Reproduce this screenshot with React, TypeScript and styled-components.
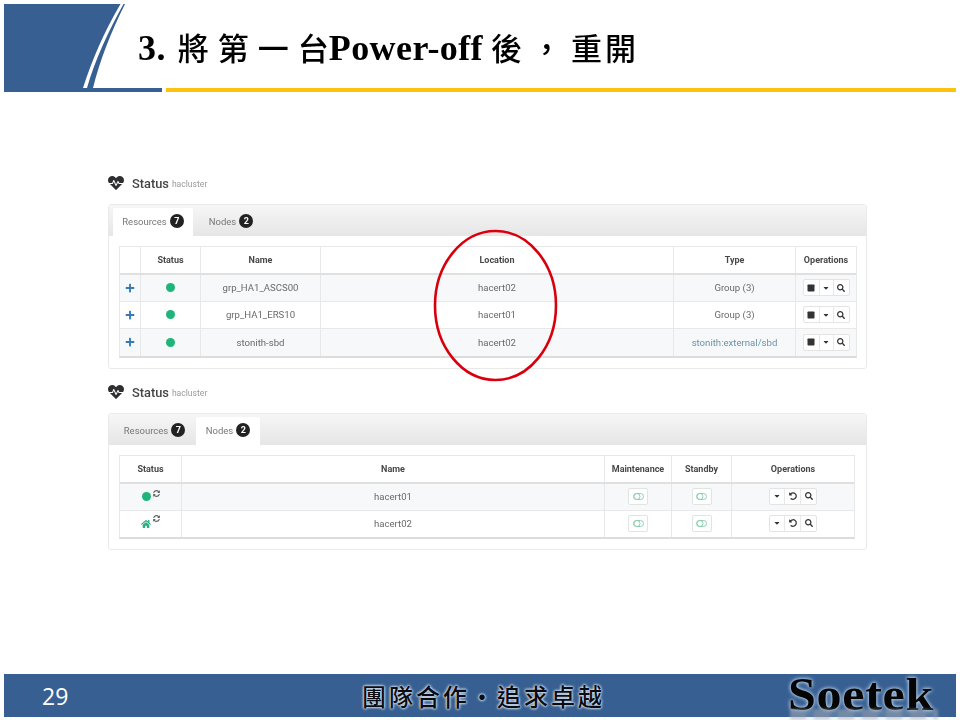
import React from "react";
import styled, { createGlobalStyle } from "styled-components";
import { FaHeartbeat, FaPlus, FaCaretDown, FaSearch, FaHome, FaSyncAlt, FaUndoAlt, FaStop } from "react-icons/fa";

const Global = createGlobalStyle`
  html, body { margin: 0; padding: 0; background: #fff; }
  body { font-family: Roboto, "Liberation Sans", sans-serif; }
`;

const Slide = styled.div`
  position: relative;
  width: 960px;
  height: 720px;
  box-sizing: border-box;
  padding: 4px 4px 3px;
  display: flex;
  flex-direction: column;
  overflow: hidden;
  background: #fff;
`;
const HeaderRow = styled.header`
  display: flex;
  align-items: center;
  height: 84px;
`;
const HeaderArt = styled.svg`
  flex: none;
  width: 121px;
  height: 84px;
`;
const Title = styled.h1`
  display: flex;
  align-items: baseline;
  margin: 0 0 0 13px;
  font: bold 36px "Liberation Serif", "Noto Sans CJK TC", serif;
  color: #000;
  white-space: nowrap;
  filter: blur(0.3px);
`;
const Latin = styled.span`
  letter-spacing: 0.4px;
`;
const Cjk = styled.span<{ $gap: number; $left: number; $right?: number }>`
  font-family: "Noto Sans CJK TC", sans-serif;
  font-weight: 500;
  font-size: 31px;
  letter-spacing: ${p => p.$gap}px;
  margin-left: ${p => p.$left}px;
  margin-right: ${p => p.$right ?? 0}px;
`;
const Rules = styled.div`
  display: flex;
  gap: 4px;
  height: 4px;
`;
const BlueRule = styled.div`
  width: 158px;
  background: #375f91;
`;
const GoldRule = styled.div`
  flex: 1;
  background: #fdc20e;
`;
const Main = styled.main`
  flex: 1;
  padding: 82px 89px 0 104px;
  display: flex;
  flex-direction: column;
  gap: 14px;
  filter: blur(0.45px);
`;
const Section = styled.section``;
const Heading = styled.div`
  display: flex;
  align-items: center;
  height: 30px;
  padding: 0 0 12px 0;
  box-sizing: border-box;
  color: #333;
  svg { font-size: 16px; margin-right: 8px; color: #2f2f33; }
`;
const HeadingTitle = styled.span`
  font-size: 12.8px;
  font-weight: 500;
  color: #444;
`;
const HeadingSub = styled.span`
  margin: 2px 0 0 3px;
  font-size: 8.6px;
  color: #9a9a9a;
`;
const Card = styled.div`
  border: 1px solid #e9e9e9;
  border-radius: 3px;
  background: #fff;
  padding-bottom: 10px;
`;
const TabBar = styled.div`
  display: flex;
  height: 31px;
  padding: 3px 0 0 4px;
  box-sizing: border-box;
  background: linear-gradient(#f6f6f6, #e6e6e6);
`;
const Tab = styled.div<{ $active?: boolean; $w: number }>`
  width: ${p => p.$w}px;
  display: flex;
  align-items: center;
  justify-content: center;
  gap: 3px;
  padding-bottom: 2px;
  box-sizing: border-box;
  font-size: 9.5px;
  color: #777;
  background: ${p => (p.$active ? "#fff" : "transparent")};
  border-radius: 2px 2px 0 0;
`;
const Badge = styled.span`
  width: 14px;
  height: 14px;
  border-radius: 50%;
  background: #222;
  color: #fff;
  font-size: 9px;
  font-weight: 700;
  display: flex;
  align-items: center;
  justify-content: center;
`;
const Table = styled.div<{ $ml: number; $mr: number }>`
  margin: 10px ${p => p.$mr}px 0 ${p => p.$ml}px;
  border: 1px solid #e8e8e8;
  border-bottom: 2px solid #dcdcdc;
`;
const Row = styled.div<{ $cols: string; $head?: boolean; $odd?: boolean; $h: number }>`
  display: grid;
  grid-template-columns: ${p => p.$cols};
  height: ${p => p.$h}px;
  box-sizing: border-box;
  background: ${p => (p.$odd ? "#f7f8fa" : "#fff")};
  border-bottom: ${p => (p.$head ? "2px solid #e0e0e0" : "1px solid #e8e8e8")};
  &:last-child { border-bottom: 0; }
`;
const Cell = styled.div<{ $head?: boolean; $link?: boolean }>`
  display: flex;
  align-items: center;
  justify-content: center;
  padding-bottom: 1px;
  border-left: 1px solid #e8e8e8;
  font-size: ${p => (p.$head ? 9 : 9.6)}px;
  font-weight: ${p => (p.$head ? 700 : 400)};
  color: ${p => (p.$head ? "#484848" : p.$link ? "#6a93a8" : "#6a6a6a")};
  white-space: nowrap;
  &:first-child { border-left: 0; }
`;
const Plus = styled(FaPlus)`
  font-size: 10px;
  color: #337ab7;
`;
const Dot = styled.span`
  width: 9px;
  height: 9px;
  border-radius: 50%;
  background: #1fb57a;
`;
const StatusIcons = styled.span`
  display: flex;
  align-items: flex-start;
  gap: 2px;
`;
const HomeIcon = styled(FaHome)`
  font-size: 10px;
  color: #2cae80;
  margin-top: 2px;
`;
const Refresh = styled(FaSyncAlt)`
  font-size: 7px;
  color: #666;
  margin-top: -2px;
`;
const BtnGroup = styled.div`
  display: inline-flex;
  height: 15px;
  background: #fff;
  border: 1px solid #e4e4e4;
  border-radius: 2px;
`;
const Btn = styled.span<{ $w: number }>`
  width: ${p => p.$w}px;
  display: flex;
  align-items: center;
  justify-content: center;
  font-size: 8px;
  color: #333;
  border-left: 1px solid #e8e8e8;
  &:first-child { border-left: 0; }
`;
const ToggleBtn = styled.span`
  width: 18px;
  height: 15px;
  display: flex;
  align-items: center;
  justify-content: center;
  background: #fff;
  border: 1px solid #dfe6e2;
  border-radius: 2px;
`;
const ToggleArt = styled.svg`
  width: 11px;
  height: 7px;
`;
const Ellipse = styled.svg`
  position: absolute;
  left: 433px;
  top: 229px;
  width: 125px;
  height: 153px;
`;
const Footer = styled.footer`
  position: relative;
  height: 43px;
  flex: none;
  display: flex;
  align-items: center;
  background: #375f91;
  padding-left: 38px;
`;
const PageNo = styled.span`
  width: 320px;
  color: #fff;
  font: 23px "Open Sans", sans-serif;
`;
const Motto = styled.span`
  width: 426px;
  font: 500 24px "Noto Sans CJK TC", serif;
  color: #0b0b12;
  letter-spacing: 3px;
  white-space: nowrap;
  text-shadow: 0 0 3px #d5e4f2, 0 0 3px #d5e4f2, 0 0 2px #d5e4f2;
`;
const Logo = styled.span`
  font: bold 46px/43px "Liberation Serif", serif;
  color: #050505;
  letter-spacing: 0.6px;
  text-shadow: 0 0 4px #b9d2ea, 0 0 3px #b9d2ea;
  transform: scaleX(1.09);
  transform-origin: 0 50%;
  margin-top: -3px;
`;
const LogoShine = styled.div`
  position: absolute;
  left: 786px;
  top: 35px;
  width: 148px;
  height: 11px;
  background: repeating-linear-gradient(90deg, #a5adb6 0 16px, rgba(190, 200, 210, 0.5) 16px 24px);
  opacity: 0.55;
  filter: blur(1.5px);
  pointer-events: none;
`;

const COLS1 = "20px 60px 120px 353px 122px 1fr";
const COLS2 = "61px 423px 67px 60px 1fr";

const Toggle = () => (
  <ToggleBtn>
    <ToggleArt viewBox="0 0 11 7">
      <rect x="0.5" y="0.5" width="10" height="6" rx="3" fill="none" stroke="#8fd0b2" />
      <circle cx="4" cy="3.5" r="3" fill="none" stroke="#8fd0b2" />
    </ToggleArt>
  </ToggleBtn>
);

const resources = [
  ["grp_HA1_ASCS00", "hacert02", "Group (3)", false],
  ["grp_HA1_ERS10", "hacert01", "Group (3)", false],
  ["stonith-sbd", "hacert02", "stonith:external/sbd", true],
] as const;

const nodes = [
  { name: "hacert01", home: false },
  { name: "hacert02", home: true },
];

const Head = () => (
  <Heading>
    <FaHeartbeat />
    <HeadingTitle>Status</HeadingTitle>
    <HeadingSub>hacluster</HeadingSub>
  </Heading>
);

export default function App() {
  return (
    <Slide>
      <Global />
      <HeaderRow>
        <HeaderArt viewBox="0 0 121 84">
          <path d="M0 0H116.5C100 28 88 56 79 84H0Z" fill="#375f91" />
          <path d="M119.5 0H121C107 28 96 56 89 84H83C91 56 104 28 119.5 0Z" fill="#375f91" />
        </HeaderArt>
        <Title>
          <Latin>3.</Latin>
          <Cjk $gap={9} $left={12} $right={-9}>將第一台</Cjk>
          <Latin>Power-off</Latin>
          <Cjk $gap={9} $left={8}>後，</Cjk>
          <Cjk $gap={3} $left={0}>重開</Cjk>
        </Title>
      </HeaderRow>
      <Rules>
        <BlueRule />
        <GoldRule />
      </Rules>
      <Main>
        <Section>
          <Head />
          <Card>
            <TabBar>
              <Tab $active $w={80}>Resources <Badge>7</Badge></Tab>
              <Tab $w={76}>Nodes <Badge>2</Badge></Tab>
            </TabBar>
            <Table $ml={10} $mr={9}>
              <Row $cols={COLS1} $head $h={28}>
                <Cell $head />
                <Cell $head>Status</Cell>
                <Cell $head>Name</Cell>
                <Cell $head>Location</Cell>
                <Cell $head>Type</Cell>
                <Cell $head>Operations</Cell>
              </Row>
              {resources.map(([name, loc, type, link], i) => (
                <Row key={name} $cols={COLS1} $odd={i % 2 === 0} $h={27}>
                  <Cell><Plus /></Cell>
                  <Cell><Dot /></Cell>
                  <Cell>{name}</Cell>
                  <Cell>{loc}</Cell>
                  <Cell $link={link}>{type}</Cell>
                  <Cell>
                    <BtnGroup>
                      <Btn $w={15}><FaStop /></Btn>
                      <Btn $w={13}><FaCaretDown /></Btn>
                      <Btn $w={15}><FaSearch /></Btn>
                    </BtnGroup>
                  </Cell>
                </Row>
              ))}
            </Table>
          </Card>
        </Section>
        <Section>
          <Head />
          <Card>
            <TabBar>
              <Tab $w={83}>Resources <Badge>7</Badge></Tab>
              <Tab $active $w={64}>Nodes <Badge>2</Badge></Tab>
            </TabBar>
            <Table $ml={10} $mr={11}>
              <Row $cols={COLS2} $head $h={28}>
                <Cell $head>Status</Cell>
                <Cell $head>Name</Cell>
                <Cell $head>Maintenance</Cell>
                <Cell $head>Standby</Cell>
                <Cell $head>Operations</Cell>
              </Row>
              {nodes.map((n, i) => (
                <Row key={n.name} $cols={COLS2} $odd={i % 2 === 0} $h={26.5}>
                  <Cell>
                    <StatusIcons>
                      {n.home ? <HomeIcon /> : <Dot />}
                      <Refresh />
                    </StatusIcons>
                  </Cell>
                  <Cell>{n.name}</Cell>
                  <Cell><Toggle /></Cell>
                  <Cell><Toggle /></Cell>
                  <Cell>
                    <BtnGroup>
                      <Btn $w={14}><FaCaretDown /></Btn>
                      <Btn $w={15}><FaUndoAlt /></Btn>
                      <Btn $w={15}><FaSearch /></Btn>
                    </BtnGroup>
                  </Cell>
                </Row>
              ))}
            </Table>
          </Card>
        </Section>
      </Main>
      <Ellipse viewBox="0 0 125 153">
        <ellipse cx="62.5" cy="76.5" rx="60.5" ry="74.5" fill="none" stroke="#d9000d" strokeWidth="2.6" />
      </Ellipse>
      <Footer>
        <PageNo>29</PageNo>
        <Motto>團隊合作・追求卓越</Motto>
        <Logo>Soetek</Logo>
        <LogoShine />
      </Footer>
    </Slide>
  );
}
